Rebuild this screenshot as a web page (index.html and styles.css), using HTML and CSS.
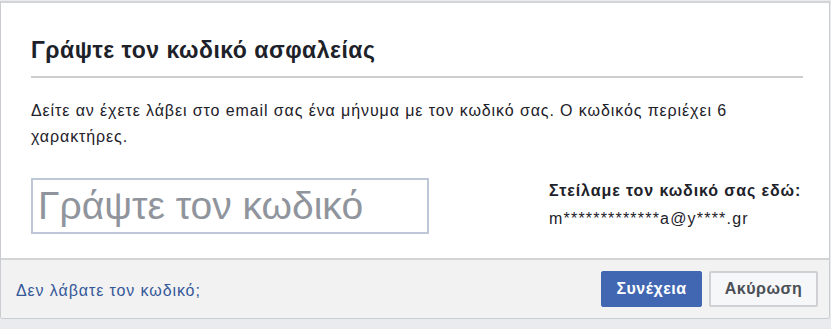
FILE: index.html
```html
<!DOCTYPE html>
<html lang="el">
<head>
<meta charset="utf-8">
<title>Γράψτε τον κωδικό ασφαλείας</title>
<link rel="stylesheet" href="styles.css">
</head>
<body>
<div class="dialog">
  <div class="content">
    <h2 class="title">Γράψτε τον κωδικό ασφαλείας</h2>
    <div class="divider"></div>
    <p class="desc">Δείτε αν έχετε λάβει στο email σας ένα μήνυμα με τον κωδικό σας. Ο κωδικός περιέχει 6 χαρακτήρες.</p>
    <div class="row">
      <input class="code" type="text" placeholder="Γράψτε τον κωδικό">
      <div class="sent">
        <div class="sent-title">Στείλαμε τον κωδικό σας εδώ:</div>
        <div class="sent-email">m*************a@y****.gr</div>
      </div>
    </div>
  </div>
  <div class="footer">
    <a class="link" href="#">Δεν λάβατε τον κωδικό;</a>
    <div class="buttons">
      <button class="btn btn-primary">Συνέχεια</button>
      <button class="btn btn-secondary">Ακύρωση</button>
    </div>
  </div>
</div>
</body>
</html>
```
FILE: styles.css
```css
html, body {
  margin: 0;
  padding: 0;
}
body {
  background: #e9ebee;
  font-family: "Liberation Sans", Arial, sans-serif;
  color: #1d2129;
  width: 831px;
  height: 329px;
  overflow: hidden;
  letter-spacing: 0.9px;
}
.dialog {
  margin-top: 1px;
  background: #fff;
  border: 1px solid #c9ccd1;
  border-top: 2px solid #d3d4d6;
  border-radius: 0 0 3px 3px;
  box-sizing: border-box;
  width: 830px;
  overflow: hidden;
}
.content {
  padding: 33px 26px 24px 30px;
}
.title {
  margin: 0;
  font-size: 23px;
  font-weight: bold;
  line-height: 28px;
  letter-spacing: 0.5px;
  color: #1d2129;
}
.divider {
  height: 2px;
  background: #cdcdcd;
  margin-top: 12px;
}
.desc {
  margin: 20px 0 0 0;
  font-size: 16px;
  line-height: 26px;
  padding-right: 60px;
}
.row {
  display: flex;
  align-items: flex-start;
  margin-top: 28px;
}
.code {
  width: 398px;
  height: 56px;
  box-sizing: border-box;
  border: 2px solid #bdc7d8;
  padding: 0 5px;
  font-family: "Liberation Sans", Arial, sans-serif;
  font-size: 39px;
  letter-spacing: 0;
  color: #1d2129;
  outline: none;
  margin: 0;
}
.code::placeholder {
  color: #90949c;
}
.sent {
  margin-left: 120px;
  padding-top: 2px;
}
.sent-title {
  font-size: 16px;
  font-weight: bold;
  line-height: 22px;
}
.sent-email {
  font-size: 16px;
  line-height: 22px;
  margin-top: 6px;
  letter-spacing: 1.2px;
}
.footer {
  display: flex;
  align-items: center;
  justify-content: space-between;
  background: #f2f2f2;
  border-top: 2px solid #d3d4d6;
  padding: 11px 11px 11px 15px;
}
.link {
  color: #365899;
  text-decoration: none;
  font-size: 16px;
  padding-top: 4px;
}
.buttons {
  display: flex;
  gap: 7px;
}
.btn {
  font-family: "Liberation Sans", Arial, sans-serif;
  font-size: 16px;
  font-weight: bold;
  letter-spacing: 0.5px;
  height: 36px;
  border-radius: 2px;
  padding: 0 8px;
  margin: 0;
  cursor: pointer;
}
.btn-primary {
  background: #4267b2;
  border: 1px solid #4267b2;
  color: #fff;
  width: 101px;
}
.btn-secondary {
  background: #f6f7f9;
  border: 2px solid #ced0d4;
  color: #4b4f56;
  width: 109px;
}
```
